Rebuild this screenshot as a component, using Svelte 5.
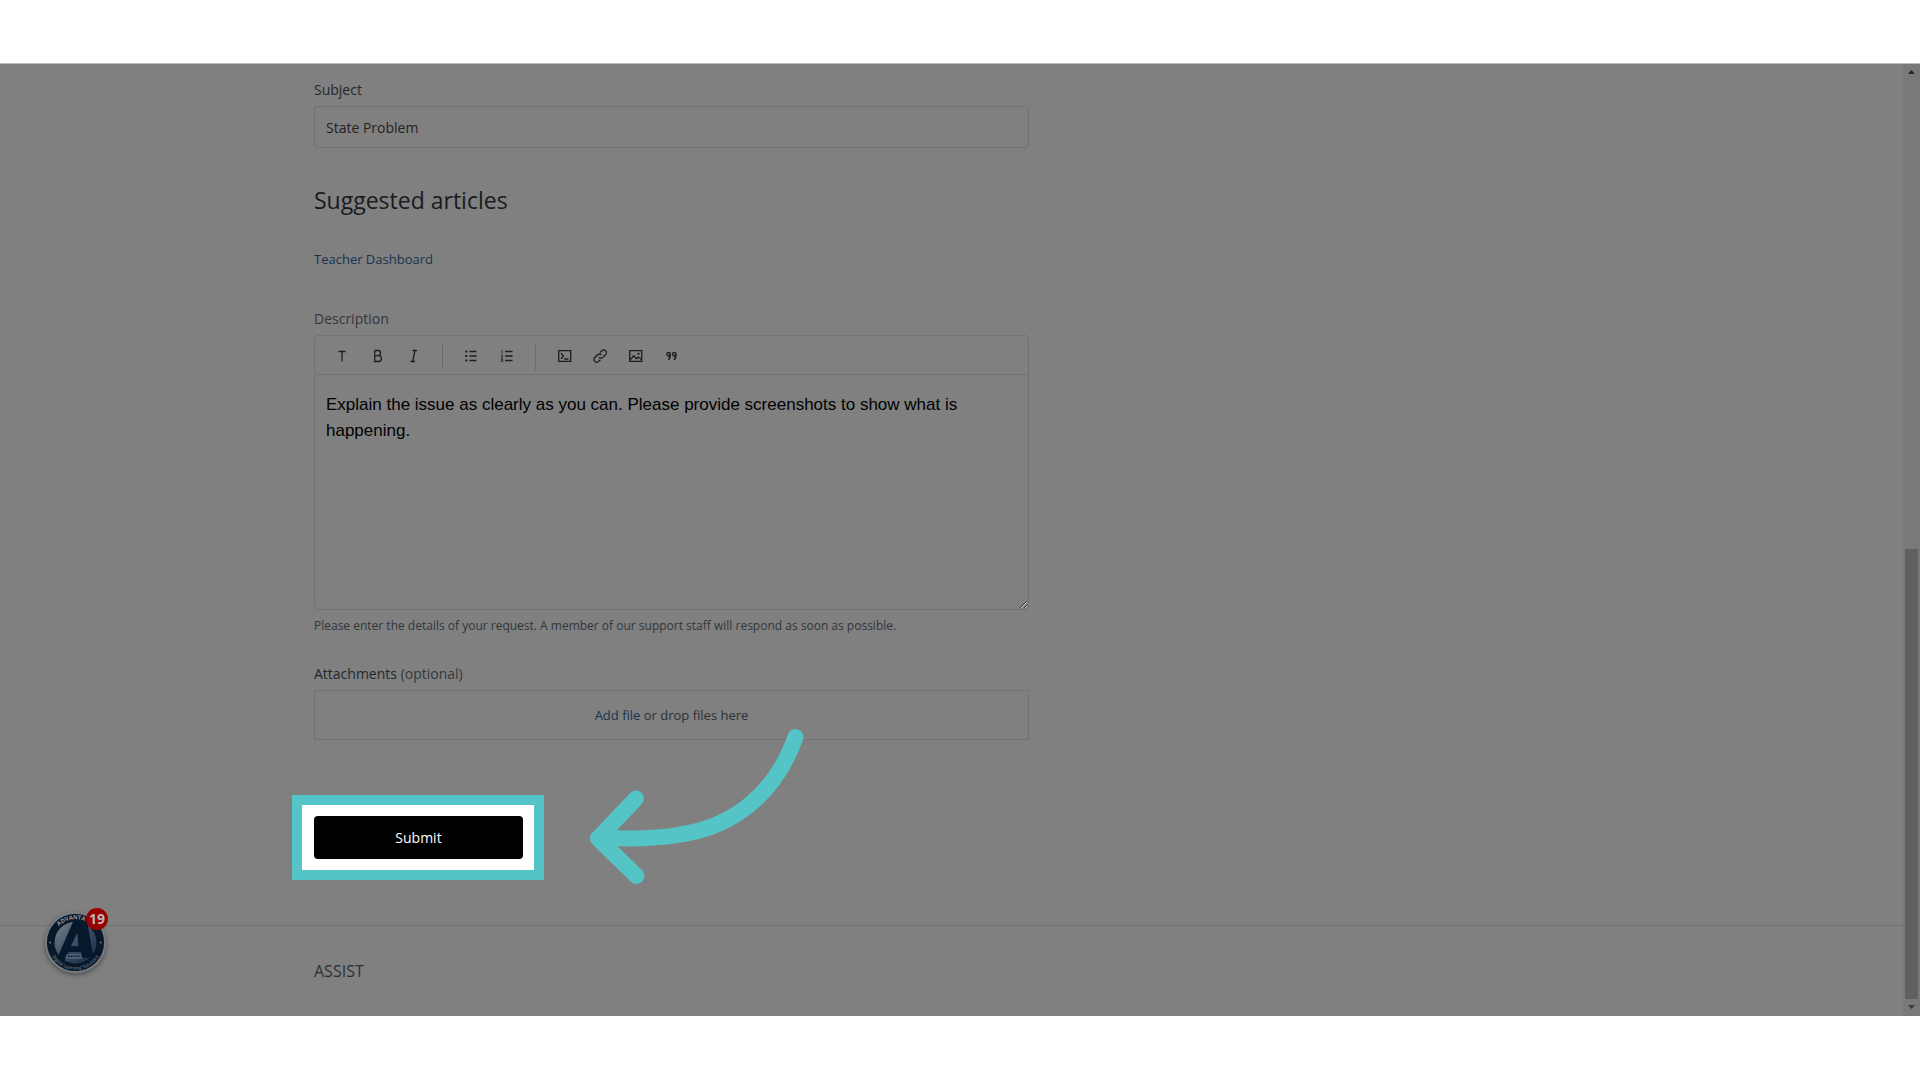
<script>
  let subject = $state('State Problem');
  let description = $state(
    'Explain the issue as clearly as you can. Please provide screenshots to show what is happening.'
  );
</script>

<div class="page">
  <div class="content">
    <main>
      <div class="container">
        <form onsubmit={(e) => e.preventDefault()}>
          <label class="label" for="subject">Subject</label>
          <input id="subject" class="text-input" type="text" bind:value={subject} />

          <h2>Suggested articles</h2>
          <a class="article" href="#teacher-dashboard">Teacher Dashboard</a>

          <label class="label dim" for="description">Description</label>
          <div class="editor">
            <div class="toolbar">
              <button type="button" aria-label="Text style">
                <svg viewBox="0 0 16 16"><path d="M4.5 3.500h7M8 3.500v10" /></svg>
              </button>
              <button type="button" aria-label="Bold">
                <svg viewBox="0 0 16 16"><path d="M4.700 2.500v11h4.100a2.600 2.900 0 0 0 0-5.800H4.700M8.200 7.700a2.300 2.600 0 0 0 0-5.200H4.700" /></svg>
              </button>
              <button type="button" aria-label="Italic">
                <svg viewBox="0 0 16 16"><path d="M6.500 2.500H11M4.500 13.500h4.500M9 2.500L6.600 13.500" /></svg>
              </button>
              <span class="divider"></span>
              <button type="button" aria-label="Bulleted list">
                <svg viewBox="0 0 16 16"><path d="M6.500 3.500h7M6.500 8h7M6.500 12.500h7" /><path class="fill" d="M2.300 2.500h2v2h-2zM2.300 7h2v2h-2zM2.300 11.500h2v2h-2z" /></svg>
              </button>
              <button type="button" aria-label="Numbered list">
                <svg viewBox="0 0 16 16"><path d="M6 3.500h7.500M6 8h7.500M6 12.500h7.500" /><path class="thin" d="M2 2.500h1v3M2 7h1.500v1.200L2 9.500h1.800M2 11h1.700v2.500H2M2.200 12.200h1.500" /></svg>
              </button>
              <span class="divider"></span>
              <button type="button" aria-label="Code block">
                <svg viewBox="0 0 16 16"><path d="M2.700 2.700h12v10.600h-12zM5 5.200L7.500 8 5 10.800M8.200 11h4.300" /></svg>
              </button>
              <button type="button" aria-label="Link">
                <svg viewBox="0 0 16 16"><path d="M7 9.300a2.700 2.700 0 0 0 3.900.1l2.700-2.700A2.700 2.700 0 0 0 9.800 2.800L8.100 4.500M9.500 6.900a2.700 2.700 0 0 0-3.900-.1L2.900 9.500a2.700 2.700 0 0 0 3.800 3.900l1.700-1.700" /></svg>
              </button>
              <button type="button" aria-label="Image">
                <svg viewBox="0 0 16 16"><path d="M1.700 2.700h12v10.600h-12zM2.500 11.500l3.300-3.800 2.700 3 1.800-1.700 3 2.500" /><circle class="fill" cx="10.500" cy="5.800" r="1.100" /></svg>
              </button>
              <button type="button" aria-label="Quote">
                <svg viewBox="0 0 16 16"><path class="heavy" d="M6.300 6a1.700 1.700 0 1 0-1.700 1.900c1 0 1.700-.7 1.700-1.900 0 2.800-.6 4.800-2 6M12 6a1.700 1.700 0 1 0-1.700 1.900c1 0 1.700-.7 1.700-1.900 0 2.800-.6 4.800-2 6" /></svg>
              </button>
            </div>
            <textarea id="description" bind:value={description}></textarea>
          </div>
          <p class="hint">
            Please enter the details of your request. A member of our support staff will respond as soon as possible.
          </p>

          <label class="label" for="files">Attachments <span class="soft">(optional)</span></label>
          <div class="drop">
            <input id="files" class="file" type="file" multiple />
            <a href="#files">Add file</a>&nbsp;or drop files here
          </div>

          <div class="spotlight">
            <button class="submit" type="submit">Submit</button>
            <svg class="arrow" viewBox="0 0 260 200" aria-hidden="true">
              <path d="M225.500 37C205 95 162 127 110 134.500C88 139 60 139 32 138" />
              <path d="M66 98.500L28 138.500L66.500 176" />
            </svg>
          </div>
        </form>
      </div>
    </main>
    <footer>
      <div class="container"><a href="#assist">ASSIST</a></div>
    </footer>

    <button class="launcher" type="button" aria-label="Open resource center, 19 unread">
      <svg viewBox="0 0 64 64">
        <defs>
          <linearGradient id="disc" x1="0" y1="0" x2="1" y2="1">
            <stop offset="0" stop-color="#7b8186" />
            <stop offset="0.500" stop-color="#3a5068" />
            <stop offset="1" stop-color="#14283f" />
          </linearGradient>
          <path id="top-arc" d="M7.500 32a24.500 24.500 0 0 1 49 0" />
          <path id="low-arc" d="M3.500 32a28.500 28.500 0 0 0 57 0" />
        </defs>
        <circle cx="32" cy="32" r="31.500" fill="#747b80" />
        <circle cx="32" cy="32" r="30" fill="#07182a" />
        <circle cx="32" cy="32" r="22" fill="url(#disc)" />
        <path d="M12 50L30 9h14l7 39H39l-1-6H25l-4 8zM27 36h8l-1-14z" fill="#07182a" fill-rule="evenodd" />
        <path d="M23 44h15l1 5H21z" fill="#4d647b" />
        <path d="M24 46.500h13" stroke="#0b1c2e" stroke-width="1.500" stroke-dasharray="2 1" />
        <circle cx="5.500" cy="32" r="1" fill="#7b8085" />
        <circle cx="58.500" cy="32" r="1" fill="#7b8085" />
        <text class="top-text"><textPath href="#top-arc" startOffset="19">ADVANTA</textPath></text>
        <text class="low-text"><textPath href="#low-arc" startOffset="50%" text-anchor="middle">Digital Learning Solutions</textPath></text>
      </svg>
      <span class="count">19</span>
    </button>
  </div>

  <div class="scrollbar" aria-hidden="true">
    <svg viewBox="0 0 17 17"><path d="M5 11h7L8.500 7z" fill="#272727" /></svg>
    <div class="track"><div class="thumb"></div></div>
    <svg viewBox="0 0 17 17"><path d="M5 6h7L8.500 10z" fill="#3c3c3c" /></svg>
  </div>
</div>

<style>
  :global(body) {
    background: #fff;
  }

  .page {
    box-sizing: border-box;
    display: flex;
    min-height: 100vh;
    border: solid #fff;
    border-width: 63px 0 64px;
    background: #808080;
    color: #191b1e;
    font: 14px/20px 'Open Sans', 'Noto Sans', sans-serif;
    box-shadow: inset 0 1px #bbb;
  }

  .content {
    position: relative;
    display: flex;
    flex: 1;
    flex-direction: column;
    min-width: 0;
  }

  main {
    flex: 1;
  }

  .container {
    box-sizing: border-box;
    max-width: 1275px;
    margin: 0 auto;
  }

  form {
    display: flex;
    flex-direction: column;
    max-width: 715px;
    padding-top: 17px;
  }

  a {
    color: #18334f;
    text-decoration: none;
  }

  .label {
    margin-bottom: 6px;
    color: #23272a;
  }

  .dim {
    color: #34373a;
  }

  .soft {
    color: #34383d;
  }

  .text-input {
    box-sizing: border-box;
    width: 100%;
    height: 42px;
    padding: 0 11px;
    border: 1px solid #727272;
    border-radius: 4px;
    background: transparent;
    color: #222;
    font: inherit;
  }

  h2 {
    margin: 36px 0 33px;
    color: #191b1e;
    font-size: 23px;
    font-weight: 400;
    line-height: 32px;
  }

  .article {
    align-self: flex-start;
    margin-bottom: 40px;
    font-size: 13px;
  }

  .editor {
    border: 1px solid #727272;
    border-radius: 4px;
  }

  .toolbar {
    box-sizing: border-box;
    display: flex;
    align-items: center;
    height: 39px;
    padding: 2px 0 0 9px;
    border-bottom: 1px solid #727272;
  }

  .toolbar button {
    display: grid;
    place-items: center;
    width: 36px;
    height: 36px;
    padding: 0;
    border: 0;
    background: none;
  }

  .toolbar svg {
    width: 16px;
    height: 16px;
    fill: none;
    stroke: #1b1d1f;
    stroke-width: 1.3;
  }

  .toolbar .fill {
    fill: #1b1d1f;
    stroke: none;
  }

  .toolbar .thin {
    stroke-width: 0.8;
  }

  .toolbar .heavy {
    stroke-width: 1.5;
  }

  .divider {
    width: 1px;
    height: 27px;
    margin: 0 10px;
    background: #6b6b6b;
  }

  textarea {
    display: block;
    box-sizing: border-box;
    width: 100%;
    height: 234px;
    padding: 17px 11px;
    border: 0;
    outline: 0;
    resize: vertical;
    background: transparent;
    color: #000;
    font: 17px/26px 'Liberation Sans', Arial, sans-serif;
  }

  .hint {
    margin: 6px 0 28px;
    color: #30363c;
    font-size: 12px;
  }

  .drop {
    display: flex;
    align-items: center;
    justify-content: center;
    height: 48px;
    border: 1px solid #727272;
    color: #2b3036;
    font-size: 13px;
  }

  .file {
    position: absolute;
    width: 1px;
    height: 1px;
    opacity: 0;
  }

  .spotlight {
    position: relative;
    align-self: flex-start;
    margin: 55px 0 0 -22px;
    padding: 11px 11px 11px 12px;
    border: 10px solid #54c4c7;
    background: #fff;
  }

  .submit {
    display: block;
    width: 209px;
    height: 43px;
    padding: 0;
    border: 0;
    border-radius: 4px;
    background: #000;
    color: #fff;
    font: inherit;
  }

  .arrow {
    position: absolute;
    top: -105px;
    left: 268px;
    width: 260px;
    height: 200px;
    fill: none;
    stroke: #54c4c7;
    stroke-width: 16;
    stroke-linecap: round;
    stroke-linejoin: round;
  }

  footer {
    padding: 35px 0 34px;
    border-top: 1px solid #707070;
  }

  footer a {
    color: #2c3034;
    font-size: 16px;
  }

  .launcher {
    position: absolute;
    bottom: 43px;
    left: 45px;
    width: 61px;
    height: 61px;
    padding: 0;
    border: 0;
    border-radius: 50%;
    background: none;
    box-shadow: 0 2px 5px #0006;
  }

  .launcher svg {
    display: block;
    width: 100%;
  }

  .top-text {
    fill: #999;
    font: 700 6px 'Open Sans', sans-serif;
  }

  .low-text {
    fill: #858b91;
    font: 5px 'Open Sans', sans-serif;
  }

  .count {
    position: absolute;
    top: -4px;
    right: -2px;
    width: 22px;
    height: 22px;
    border-radius: 50%;
    background: #900;
    color: #b9b9b9;
    font: 700 14px/22px 'Noto Sans', sans-serif;
    text-align: center;
  }

  .scrollbar {
    display: flex;
    flex-direction: column;
    width: 17px;
    background: #797979;
    box-shadow: inset 0 1px #bbb;
  }

  .track {
    display: flex;
    flex: 1;
    flex-direction: column;
    justify-content: flex-end;
    padding: 0 2px;
  }

  .thumb {
    height: 49%;
    background: #606060;
  }
</style>
